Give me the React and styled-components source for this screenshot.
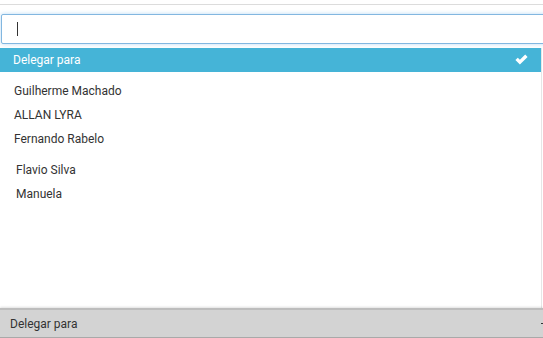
import styled, { createGlobalStyle } from 'styled-components'

const GlobalStyle = createGlobalStyle`
	html, body {
		margin: 0;
		padding: 0;
		background: #ffffff;
		overflow: hidden;
	}
	body {
		font-family: Roboto, "Liberation Sans", Arial, sans-serif;
	}
`

const groups = [
	{ indent: 14, names: ['Guilherme Machado', 'ALLAN LYRA', 'Fernando Rabelo'] },
	{ indent: 16, names: ['Flavio Silva', 'Manuela'] },
]

export default function App() {
	return (
		<Page>
			<GlobalStyle />
			<TopEdge />
			<SearchRow>
				<SearchInput>
					<Caret />
				</SearchInput>
			</SearchRow>
			<Panel>
				<SelectedOption>
					<span>Delegar para</span>
					<CheckIcon viewBox="0 0 13 11">
						<path d="M0.4 6.1 L2.8 3.7 L4.9 5.8 L10.2 0.5 L12.6 2.9 L4.9 10.6 Z" fill="#ffffff" />
					</CheckIcon>
				</SelectedOption>
				{groups.map((group, i) => (
					<Group key={i}>
						{group.names.map(name => (
							<Option key={name} indent={group.indent}>{name}</Option>
						))}
					</Group>
				))}
			</Panel>
			<Footer>
				<FooterText>Delegar para</FooterText>
				<FooterArrow />
			</Footer>
		</Page>
	)
}

const Page = styled.div`
	height: 338px;
	width: 543px;
	display: flex;
	flex-direction: column;
	overflow: hidden;
`

const TopEdge = styled.div`
	height: 4px;
	border-bottom: 1px solid #dcdcdc;
	flex-shrink: 0;
`

const SearchRow = styled.div`
	padding: 9px 0 0 1px;
	flex-shrink: 0;
`

const SearchInput = styled.div`
	height: 28px;
	width: 560px;
	box-sizing: content-box;
	border: 1px solid #82b7e0;
	border-radius: 2px;
	box-shadow: 0 0 4px rgba(102, 175, 233, 0.45);
	background: #ffffff;
	display: flex;
	align-items: center;
	padding-left: 15px;
`

const Caret = styled.div`
	width: 1px;
	height: 14px;
	background: #333333;
`

const Panel = styled.div`
	flex: 1;
	margin-top: 4px;
	width: 542px;
	border-right: 1px solid #e6e6e6;
	box-sizing: border-box;
	display: flex;
	flex-direction: column;
`

const SelectedOption = styled.div`
	height: 24px;
	background: #45b4d7;
	color: #ffffff;
	font-size: 12px;
	display: flex;
	align-items: center;
	justify-content: space-between;
	padding: 0 13px 0 13px;
`

const CheckIcon = styled.svg`
	width: 13px;
	height: 11px;
	margin-bottom: 1px;
`

const Group = styled.div`
	display: flex;
	flex-direction: column;
	padding-top: 7px;
`

const Option = styled.div`
	height: 24px;
	line-height: 24px;
	font-size: 12px;
	color: #333333;
	padding-left: ${p => p.indent}px;
`

const Footer = styled.div`
	height: 30px;
	flex-shrink: 0;
	background: #d3d3d3;
	border-top: 2px solid #bdbdbd;
	box-shadow: 0 -1px 2px rgba(0, 0, 0, 0.12);
	border-bottom: 1px solid #a9a9a9;
	box-sizing: border-box;
	display: flex;
	align-items: center;
	justify-content: space-between;
	padding-left: 10px;
`

const FooterText = styled.span`
	font-size: 12px;
	color: #333333;
`

const FooterArrow = styled.div`
	width: 3px;
	height: 1px;
	background: #333333;
	margin-right: -1px;
`
